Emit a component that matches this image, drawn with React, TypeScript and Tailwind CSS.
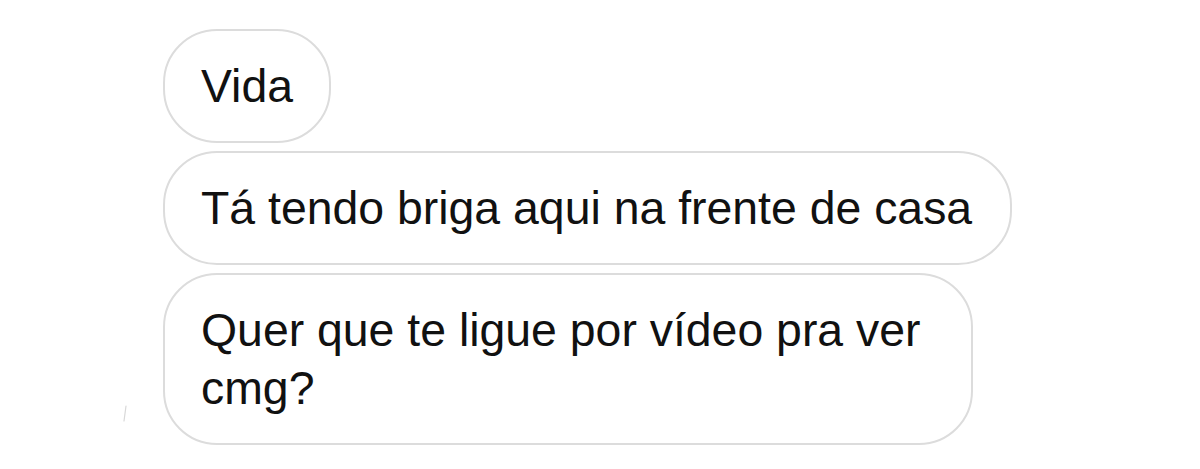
import React from 'react'

type BubbleProps = {
  children: React.ReactNode,
  className?: string
}

const Bubble: React.FC<BubbleProps> = ({ children, className = '' }) => {
  return (
    <div
      className={`border-2 border-[#dcdcdc] rounded-[54px] bg-white pl-[36px] pr-[36px] py-[26px] text-[46.4px] leading-[58px] text-[#111111] ${className}`}
    >
      {children}
    </div>
  )
}

const App: React.FC = () => {
  return (
    <div
      className="relative w-[1200px] h-[469px] bg-white overflow-hidden pl-[163px] pt-[29px]"
      style={{ fontFamily: '"Liberation Sans", Arial, sans-serif' }}
    >
      <div className="flex flex-col items-start gap-[8px]">
        <Bubble className="pr-[34px]">Vida</Bubble>
        <Bubble className="whitespace-nowrap pr-[38px]">Tá tendo briga aqui na frente de casa</Bubble>
        <Bubble className="max-w-[810px] w-[810px] rounded-[50px]">
          Quer que te ligue por vídeo pra ver cmg?
        </Bubble>
      </div>
      <svg className="absolute left-[120px] top-[404px]" width="10" height="20" viewBox="0 0 10 20">
        <path d="M6 2 L4 17" stroke="#d8d8d8" strokeWidth="1.2" strokeLinecap="round" fill="none" />
      </svg>
    </div>
  )
}

export default App
